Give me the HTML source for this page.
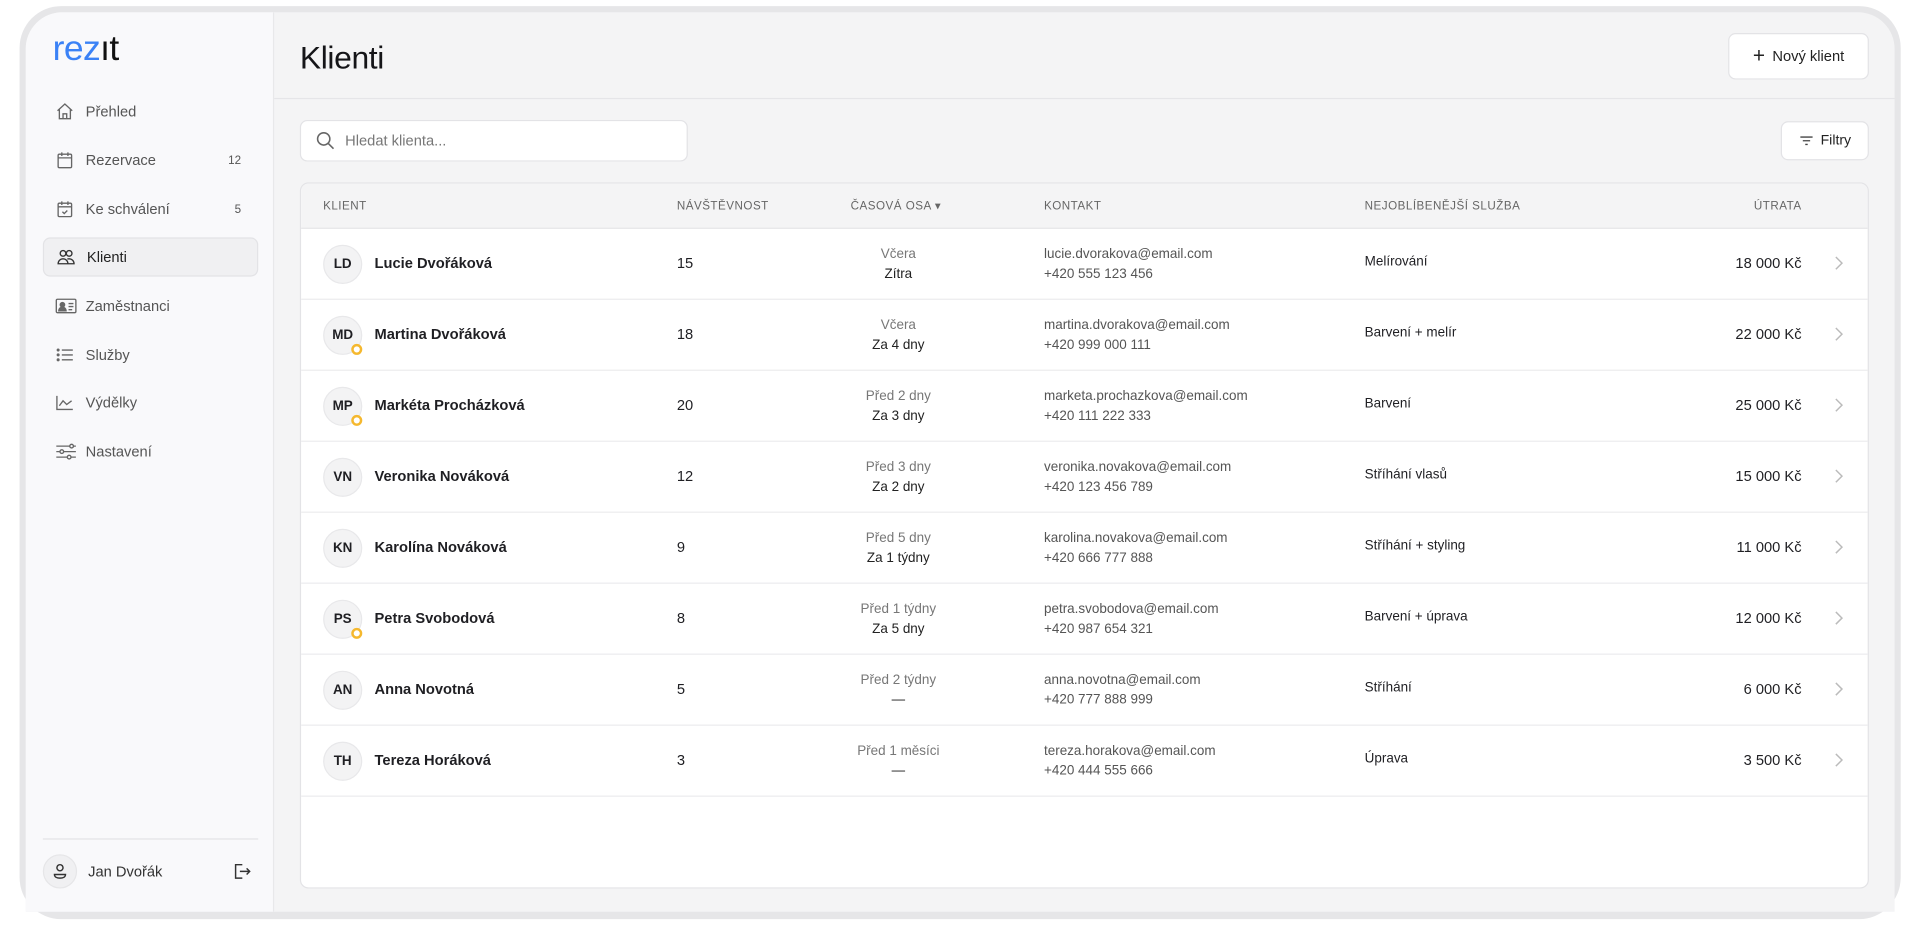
<!DOCTYPE html>
<html><head><meta charset="utf-8"><style>
*{box-sizing:border-box;margin:0;padding:0}
html,body{width:1919px;height:925px;overflow:hidden;background:#fff;font-family:"Liberation Sans",sans-serif;color:#1f1f23}
#w{position:absolute;left:0;top:0;width:1568px;height:756px;transform:scale(1.2239);transform-origin:0 0}
.frame{position:absolute;left:16px;top:5px;width:1537px;height:746px;border-radius:34px;background:#e6e6e8}
.inner{position:absolute;left:21px;top:10px;width:1527px;height:735px;border-radius:30px 30px 0 0;overflow:hidden;background:#f4f4f5}
.side{position:absolute;left:0;top:0;width:203px;height:100%;background:#f9f9fb;border-right:1px solid #e8e8ea}
.logo{position:absolute;left:22px;top:14px;font-size:29px;letter-spacing:-0.5px;font-weight:normal}
.nav{position:absolute;left:14px;width:176px;height:32px;display:flex;align-items:center;font-size:12px;color:#555}
.nav svg{position:absolute;left:10px}
.nav span.t{position:absolute;left:35px}
.nav .b{position:absolute;right:14px;font-size:9.5px;color:#555}
.nav.act{background:#f0f0f2;border:1px solid #e3e3e6;border-radius:6px;color:#222}
.main{position:absolute;left:203px;top:0;right:0;bottom:0}
.hdr{position:absolute;left:0;top:0;right:0;height:71px;border-bottom:1px solid #e5e5e8}
h1{position:absolute;left:21px;top:22px;font-size:26px;font-weight:normal;color:#151518;letter-spacing:-0.3px}
.btn{position:absolute;background:#fff;border:1px solid #e3e3e6;border-radius:6px;font-size:12px;display:flex;align-items:center;justify-content:center;gap:6px;color:#222}
.search{position:absolute;left:21px;top:88px;width:317px;height:34px;background:#fff;border:1px solid #e3e3e6;border-radius:6px;font-size:12px;color:#777;display:flex;align-items:center;padding-left:12px;gap:8px}
.card{position:absolute;left:21px;top:139px;width:1282px;height:577px;background:#fff;border:1px solid #e3e3e6;border-radius:7px;overflow:hidden}
.th{height:37px;background:#f4f4f5;border-bottom:1px solid #e6e6e8;position:relative;font-size:9.5px;color:#666;letter-spacing:.4px}
.th span,.row span{position:absolute}
.th span{top:13px}
.row{height:58px;border-bottom:1px solid #ececee;position:relative;font-size:12px}
.av{left:18px;top:13px;width:32px;height:32px;border-radius:50%;background:#f3f3f4;border:1px solid #e8e8ea;font-size:11px;font-weight:600;display:flex;align-items:center;justify-content:center}
.dot{left:41px;top:36px;width:9px;height:9px;border-radius:50%;border:2px solid #f5b82e;background:#fff}
.nm{left:60px;top:21px;font-weight:600;font-size:12px}
.vis{left:307px;top:21px}
.tl{left:418px;width:140px;text-align:center;top:13px;font-size:11px;line-height:16px}
.tl i{font-style:normal;color:#777;display:block}
.tl b{font-weight:normal;color:#222;display:block}
.ct{left:607px;top:13px;font-size:11px;line-height:16px;color:#555}
.sv{left:869px;top:21px;font-size:11px}
.ut{right:54px;top:21px;font-size:12px}
.ch{right:20px;top:22px}
</style></head><body><div id="w">
<div class="frame"></div>
<div class="inner">
<div class="side">
<div class="logo"><span style="color:#3b82f6">rez</span><span style="color:#111">ıt</span></div>
<div class="nav" style="top:65px"><svg width="16" height="16" viewBox="0 0 16 16" fill="none" stroke="#666" stroke-width="1.1"><path d="M2 7.5L8 2l6 5.5M3.5 6.5V14h9V6.5M6.5 14V10h3v4"/></svg><span class="t">Přehled</span></div>
<div class="nav" style="top:105px"><svg width="16" height="16" viewBox="0 0 16 16" fill="none" stroke="#666" stroke-width="1.1"><rect x="2.5" y="3" width="11" height="11" rx="1"/><path d="M2.5 6h11M5.5 1.5v3M10.5 1.5v3"/></svg><span class="t">Rezervace</span><span class="b">12</span></div>
<div class="nav" style="top:145px"><svg width="16" height="16" viewBox="0 0 16 16" fill="none" stroke="#666" stroke-width="1.1"><rect x="2.5" y="3" width="11" height="11" rx="1"/><path d="M2.5 6h11M5.5 1.5v3M10.5 1.5v3M6 10l1.5 1.5L10 9"/></svg><span class="t">Ke schválení</span><span class="b">5</span></div>
<div class="nav act" style="top:184px"><svg width="16" height="16" viewBox="0 0 16 16" fill="none" stroke="#333" stroke-width="1.1"><circle cx="5.5" cy="5" r="2.3"/><circle cx="10.5" cy="5" r="2.3"/><path d="M1.5 13.5c0-2.5 2-4 4-4s4 1.5 4 4zM9 9.6c.5-.1 1-.1 1.5-.1 2 0 4 1.5 4 4H10"/></svg><span class="t">Klienti</span></div>
<div class="nav" style="top:224px"><svg width="18" height="14" viewBox="0 0 18 14" fill="none" stroke="#666" stroke-width="1.1"><rect x="1" y="1.5" width="16" height="11" rx="1"/><circle cx="6" cy="6" r="1.8" fill="#666"/><path d="M3 11c0-2 1.5-3 3-3s3 1 3 3z" fill="#666"/><path d="M11 5h4M11 7.5h4M11 10h3"/></svg><span class="t">Zaměstnanci</span></div>
<div class="nav" style="top:264px"><svg width="16" height="16" viewBox="0 0 16 16" fill="none" stroke="#666" stroke-width="1.1"><path d="M5.5 4h9M5.5 8h9M5.5 12h9"/><circle cx="2.5" cy="4" r=".7" fill="#666"/><circle cx="2.5" cy="8" r=".7" fill="#666"/><circle cx="2.5" cy="12" r=".7" fill="#666"/></svg><span class="t">Služby</span></div>
<div class="nav" style="top:303px"><svg width="16" height="16" viewBox="0 0 16 16" fill="none" stroke="#666" stroke-width="1.1"><path d="M1.5 2.5v11h13M3.5 10.5l3-4 3 3 4-3"/></svg><span class="t">Výdělky</span></div>
<div class="nav" style="top:343px"><svg width="18" height="16" viewBox="0 0 18 16" fill="none" stroke="#666" stroke-width="1.1"><path d="M1 3.5h11M15 3.5h2M1 8h3M7 8h10M1 12.5h9M13 12.5h4"/><circle cx="13.5" cy="3.5" r="1.5"/><circle cx="5.5" cy="8" r="1.5"/><circle cx="11.5" cy="12.5" r="1.5"/></svg><span class="t">Nastavení</span></div>
<div style="position:absolute;left:14px;right:12px;top:675px;border-top:1px solid #e3e3e6"></div>
<div style="position:absolute;left:14px;top:688px;width:28px;height:28px;border-radius:50%;background:#f0f0f2;border:1px solid #e6e6e8;display:flex;align-items:center;justify-content:center"><svg width="14" height="14" viewBox="0 0 14 14" fill="none" stroke="#333" stroke-width="1.2"><circle cx="7" cy="4" r="2.5"/><path d="M2.5 9.5h9c0 2-2 3-4.5 3s-4.5-1-4.5-3z"/></svg></div>
<div style="position:absolute;left:51px;top:695px;font-size:12px;color:#333">Jan Dvořák</div>
<svg style="position:absolute;left:169px;top:695px" width="15" height="14" viewBox="0 0 15 14" fill="none" stroke="#333" stroke-width="1.2"><path d="M8 1.5H2.5v11H8M6 7h8M11.5 4.5L14 7l-2.5 2.5"/></svg>
</div>
<div class="main">
<div class="hdr"><h1>Klienti</h1>
<div class="btn" style="left:1188px;top:17px;width:115px;height:38px"><span style="font-size:17px;font-weight:300">+</span>Nový klient</div></div>
<div class="search"><svg width="16" height="16" viewBox="0 0 16 16" fill="none" stroke="#666" stroke-width="1.3"><circle cx="6.5" cy="6.5" r="5"/><path d="M10.3 10.3L14.5 14.5"/></svg>Hledat klienta...</div>
<div class="btn" style="left:1231px;top:89px;width:72px;height:32px;font-size:11.5px"><svg width="12" height="10" viewBox="0 0 12 10" stroke="#444" stroke-width="1.1"><path d="M1 2h10M3 5h6M5 8h2"/></svg>Filtry</div>
<div class="card">
<div class="th"><span style="left:18px">KLIENT</span><span style="left:307px">NÁVŠTĚVNOST</span><span style="left:449px">ČASOVÁ OSA ▾</span><span style="left:607px">KONTAKT</span><span style="left:869px">NEJOBLÍBENĚJŠÍ SLUŽBA</span><span style="right:54px">ÚTRATA</span></div>
<div class="row"><span class="av">LD</span><span class="nm">Lucie Dvořáková</span><span class="vis">15</span><span class="tl"><i>Včera</i><b>Zítra</b></span><span class="ct">lucie.dvorakova@email.com<br>+420 555 123 456</span><span class="sv">Melírování</span><span class="ut">18 000 Kč</span><svg class="ch" style="position:absolute" width="8" height="12" viewBox="0 0 8 12" fill="none" stroke="#bbb" stroke-width="1.2"><path d="M2 1l5 5-5 5"/></svg></div>
<div class="row"><span class="av">MD</span><span class="dot"></span><span class="nm">Martina Dvořáková</span><span class="vis">18</span><span class="tl"><i>Včera</i><b>Za 4 dny</b></span><span class="ct">martina.dvorakova@email.com<br>+420 999 000 111</span><span class="sv">Barvení + melír</span><span class="ut">22 000 Kč</span><svg class="ch" style="position:absolute" width="8" height="12" viewBox="0 0 8 12" fill="none" stroke="#bbb" stroke-width="1.2"><path d="M2 1l5 5-5 5"/></svg></div>
<div class="row"><span class="av">MP</span><span class="dot"></span><span class="nm">Markéta Procházková</span><span class="vis">20</span><span class="tl"><i>Před 2 dny</i><b>Za 3 dny</b></span><span class="ct">marketa.prochazkova@email.com<br>+420 111 222 333</span><span class="sv">Barvení</span><span class="ut">25 000 Kč</span><svg class="ch" style="position:absolute" width="8" height="12" viewBox="0 0 8 12" fill="none" stroke="#bbb" stroke-width="1.2"><path d="M2 1l5 5-5 5"/></svg></div>
<div class="row"><span class="av">VN</span><span class="nm">Veronika Nováková</span><span class="vis">12</span><span class="tl"><i>Před 3 dny</i><b>Za 2 dny</b></span><span class="ct">veronika.novakova@email.com<br>+420 123 456 789</span><span class="sv">Stříhání vlasů</span><span class="ut">15 000 Kč</span><svg class="ch" style="position:absolute" width="8" height="12" viewBox="0 0 8 12" fill="none" stroke="#bbb" stroke-width="1.2"><path d="M2 1l5 5-5 5"/></svg></div>
<div class="row"><span class="av">KN</span><span class="nm">Karolína Nováková</span><span class="vis">9</span><span class="tl"><i>Před 5 dny</i><b>Za 1 týdny</b></span><span class="ct">karolina.novakova@email.com<br>+420 666 777 888</span><span class="sv">Stříhání + styling</span><span class="ut">11 000 Kč</span><svg class="ch" style="position:absolute" width="8" height="12" viewBox="0 0 8 12" fill="none" stroke="#bbb" stroke-width="1.2"><path d="M2 1l5 5-5 5"/></svg></div>
<div class="row"><span class="av">PS</span><span class="dot"></span><span class="nm">Petra Svobodová</span><span class="vis">8</span><span class="tl"><i>Před 1 týdny</i><b>Za 5 dny</b></span><span class="ct">petra.svobodova@email.com<br>+420 987 654 321</span><span class="sv">Barvení + úprava</span><span class="ut">12 000 Kč</span><svg class="ch" style="position:absolute" width="8" height="12" viewBox="0 0 8 12" fill="none" stroke="#bbb" stroke-width="1.2"><path d="M2 1l5 5-5 5"/></svg></div>
<div class="row"><span class="av">AN</span><span class="nm">Anna Novotná</span><span class="vis">5</span><span class="tl"><i>Před 2 týdny</i><b>—</b></span><span class="ct">anna.novotna@email.com<br>+420 777 888 999</span><span class="sv">Stříhání</span><span class="ut">6 000 Kč</span><svg class="ch" style="position:absolute" width="8" height="12" viewBox="0 0 8 12" fill="none" stroke="#bbb" stroke-width="1.2"><path d="M2 1l5 5-5 5"/></svg></div>
<div class="row"><span class="av">TH</span><span class="nm">Tereza Horáková</span><span class="vis">3</span><span class="tl"><i>Před 1 měsíci</i><b>—</b></span><span class="ct">tereza.horakova@email.com<br>+420 444 555 666</span><span class="sv">Úprava</span><span class="ut">3 500 Kč</span><svg class="ch" style="position:absolute" width="8" height="12" viewBox="0 0 8 12" fill="none" stroke="#bbb" stroke-width="1.2"><path d="M2 1l5 5-5 5"/></svg></div>
</div>
</div>
</div>
</div></body></html>
